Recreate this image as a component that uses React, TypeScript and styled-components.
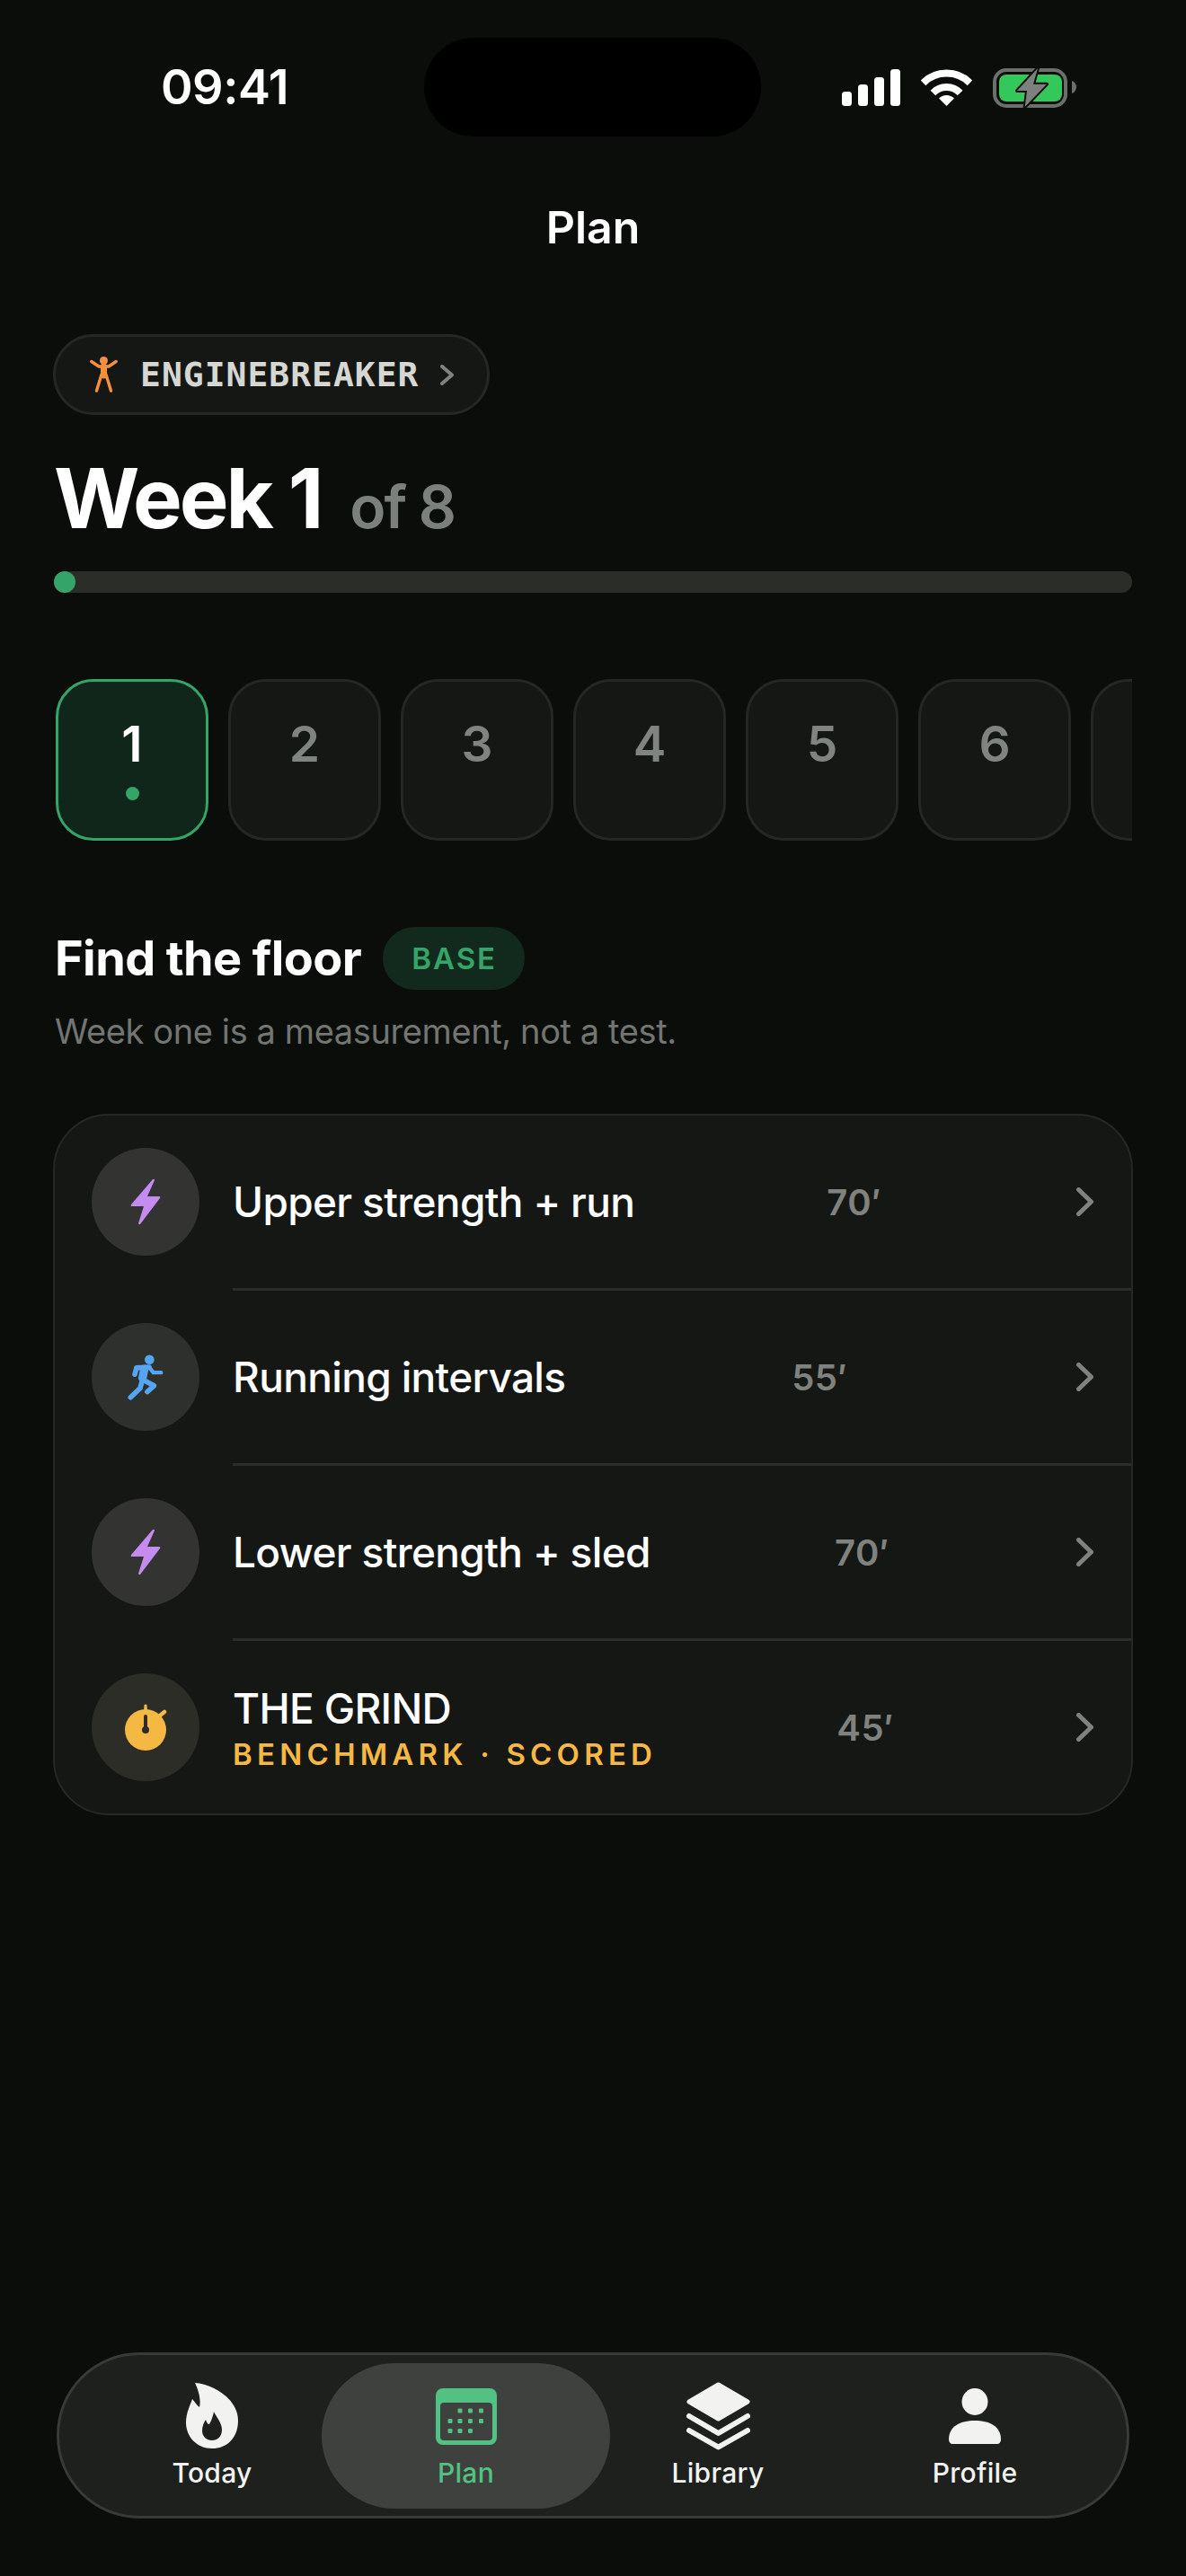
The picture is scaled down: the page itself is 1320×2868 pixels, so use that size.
import React from 'react';
import styled, { createGlobalStyle } from 'styled-components';

const GlobalStyle = createGlobalStyle`
  html, body {
    margin: 0;
    padding: 0;
    background: #0b0d0b;
  }
  * {
    box-sizing: border-box;
  }
`;

const Page = styled.div`
  width: 1320px;
  height: 2868px;
  display: flex;
  flex-direction: column;
  background: #0b0d0b;
  color: #fff;
  font-family: Inter, "Liberation Sans", sans-serif;
  overflow: hidden;
`;

const StatusBar = styled.div`
  display: flex;
  align-items: center;
  padding: 42px 0 0 179px;
`;

const Clock = styled.div`
  width: 293px;
  font-size: 54px;
  line-height: 60px;
  font-weight: 600;
  letter-spacing: -0.5px;
`;

const Island = styled.div`
  width: 375px;
  height: 110px;
  border-radius: 55px;
  background: #000;
`;

const StatusIcons = styled.div`
  display: flex;
  align-items: center;
  gap: 23px;
  margin-left: 90px;
`;

const ScreenTitle = styled.h1`
  margin: 71px 0 0;
  text-align: center;
  font-size: 50px;
  line-height: 60px;
  font-weight: 600;
`;

const Content = styled.div`
  display: flex;
  flex-direction: column;
  align-items: flex-start;
  padding: 89px 60px 0;
`;

const ProgramPill = styled.div`
  display: inline-flex;
  align-items: center;
  height: 90px;
  margin-left: -1px;
  padding: 0 37px 0 38px;
  border: 3px solid #252724;
  border-radius: 45px;
  background: #151715;
`;

const ProgramName = styled.span`
  margin: 0 24px 0 25px;
  font-family: "DejaVu Sans Mono", "Liberation Mono", monospace;
  font-size: 38px;
  line-height: 44px;
  font-weight: 600;
  letter-spacing: 1px;
  color: #d6d7d3;
`;

const WeekHeading = styled.div`
  display: flex;
  align-items: baseline;
  margin: 37px 0 0 0;
`;

const WeekNumber = styled.span`
  font-size: 92px;
  line-height: 112px;
  font-weight: 700;
  letter-spacing: -3px;
`;

const WeekTotal = styled.span`
  margin-left: 32px;
  font-size: 66px;
  font-weight: 600;
  letter-spacing: -2px;
  color: #7c807c;
`;

const ProgressTrack = styled.div`
  width: 1200px;
  height: 24px;
  margin-top: 25px;
  border-radius: 12px;
  background: #2b2d28;
`;

const ProgressFill = styled.div`
  height: 100%;
  border-radius: 12px;
  background: #34a468;
`;

const WeekStrip = styled.div`
  display: flex;
  gap: 22px;
  width: 1200px;
  margin-top: 96px;
  padding-left: 2px;
  overflow: hidden;
`;

const WeekTile = styled.div<{ $active?: boolean }>`
  flex: 0 0 170px;
  height: 180px;
  display: flex;
  flex-direction: column;
  align-items: center;
  padding-top: 37px;
  border: 3px solid ${props => (props.$active ? '#34a468' : '#252724')};
  border-radius: 42px;
  background: ${props => (props.$active ? '#11261b' : '#151715')};
`;

const TileNumber = styled.span<{ $active?: boolean }>`
  font-size: 55px;
  line-height: 64px;
  font-weight: 600;
  color: ${props => (props.$active ? '#fff' : '#808480')};
`;

const TileDot = styled.span`
  width: 15px;
  height: 15px;
  margin-top: 16px;
  border-radius: 50%;
  background: #34a468;
`;

const PhaseRow = styled.div`
  display: flex;
  align-items: center;
  gap: 24px;
  margin: 96px 0 0 1px;
`;

const PhaseName = styled.h2`
  margin: 0;
  font-size: 54px;
  line-height: 70px;
  font-weight: 700;
  letter-spacing: -0.6px;
`;

const PhaseBadge = styled.span`
  display: flex;
  align-items: center;
  height: 70px;
  padding: 0 31px 0 32px;
  border-radius: 35px;
  background: #12291d;
  color: #34a468;
  font-size: 33px;
  font-weight: 600;
  letter-spacing: 2px;
`;

const PhaseNote = styled.p`
  margin: 21px 0 0 1px;
  font-size: 38px;
  line-height: 50px;
  letter-spacing: -0.4px;
  color: #727572;
`;

const SessionCard = styled.div`
  width: 1202px;
  margin: 67px 0 0 -1px;
  border: 2px solid #262825;
  border-radius: 62px;
  background: #151715;
  overflow: hidden;
`;

const SessionRow = styled.div`
  display: flex;
  align-items: center;
  gap: 37px;
  height: 192px;
  padding: 0 42px 0 41px;
`;

const SessionDivider = styled.div`
  height: 3px;
  margin-left: 198px;
  background: #2b2d28;
`;

const IconCircle = styled.div<{ $tone: string }>`
  flex: 0 0 120px;
  height: 120px;
  display: flex;
  align-items: center;
  justify-content: center;
  border-radius: 50%;
  background: ${props => props.$tone};
`;

const SessionBody = styled.div`
  flex: 1;
  display: flex;
  align-items: center;
  justify-content: space-between;
`;

const SessionName = styled.div`
  font-size: 46px;
  line-height: 56px;
  font-weight: 500;
  letter-spacing: -0.65px;
`;

const SessionTag = styled.div`
  margin-top: 3px;
  font-size: 33px;
  line-height: 40px;
  font-weight: 600;
  letter-spacing: 5.2px;
  color: #f5b842;
`;

const Duration = styled.span`
  margin-right: 3px;
  font-size: 40px;
  font-weight: 600;
  letter-spacing: 0.5px;
  color: #7f827e;
`;

const TabBar = styled.nav`
  display: grid;
  grid-template-columns: 244px 321px 240px 332px;
  height: 185px;
  margin: auto 63px 64px;
  padding: 9px 0 0 48px;
  border: 3px solid #383a39;
  border-radius: 92px;
  background: #1e201e;
`;

const Tab = styled.div<{ $active?: boolean }>`
  height: 162px;
  display: flex;
  flex-direction: column;
  align-items: center;
  padding-top: 19px;
  border-radius: 81px;
  background: ${props => (props.$active ? '#3f413e' : 'transparent')};
  color: ${props => (props.$active ? '#52c183' : '#f2f3f0')};
`;

const TabIcon = styled.div`
  height: 80px;
  display: flex;
  align-items: center;
  justify-content: center;
`;

const TabLabel = styled.span`
  margin-top: 3px;
  font-size: 30px;
  line-height: 40px;
  font-weight: 500;
  letter-spacing: 0.3px;
`;

const SignalIcon = () => (
  <svg width="65" height="41" viewBox="0 0 65 41" fill="#fff">
    <rect x="0" y="25" width="11" height="16" rx="3.5" />
    <rect x="18" y="17" width="11" height="24" rx="3.5" />
    <rect x="36" y="9" width="11" height="32" rx="3.5" />
    <rect x="54" y="0" width="11" height="41" rx="3.5" />
  </svg>
);

const WifiIcon = () => (
  <svg width="57" height="41" viewBox="0 0 57 41" fill="none" stroke="#fff" strokeWidth="8">
    <path d="M2.5 15.3A37 37 0 0 1 54.5 15.3" />
    <path d="M13.4 26.5A21 21 0 0 1 43.6 26.5" />
    <path d="M28.5 41L20 32.5A12 12 0 0 1 37 32.5Z" fill="#fff" stroke="none" />
  </svg>
);

const BatteryIcon = () => (
  <svg width="93" height="45" viewBox="0 0 93 45" fill="none">
    <rect x="2" y="3" width="79" height="40" rx="13" stroke="#6d6f6d" strokeWidth="4" />
    <rect x="7" y="8" width="70" height="30" rx="8" fill="#34c759" />
    <path d="M88 15C91 16 93 19 93 22C93 25 91 28 88 29Z" fill="#6d6f6d" />
    <path
      d="M50 1L27 26H38L35.7 44L60 18.7H45Z"
      fill="#7d807c"
      stroke="#0b0d0b"
      strokeWidth="4"
      strokeLinejoin="round"
      paintOrder="stroke"
    />
  </svg>
);

const ArmsUpIcon = () => (
  <svg width="31" height="40" viewBox="0 0 31 40" fill="none" stroke="#f58f3c" strokeLinecap="round" strokeLinejoin="round">
    <circle cx="15.5" cy="4.5" r="4.5" fill="#f58f3c" stroke="none" />
    <path d="M1.8 5.5L10 11H21L29.2 5.5" strokeWidth="3.4" />
    <path d="M15.5 11V21" strokeWidth="7" />
    <path d="M13 20L7.5 38M18 20L23.5 38" strokeWidth="3.4" />
  </svg>
);

const Chevron = ({ w, h, sw, color }: { w: number; h: number; sw: number; color: string }) => (
  <svg width={w} height={h} viewBox={`0 0 ${w} ${h}`} fill="none" stroke={color} strokeWidth={sw} strokeLinecap="round" strokeLinejoin="round">
    <path d={`M${sw / 2} ${sw / 2}L${w - sw / 2} ${h / 2}L${sw / 2} ${h - sw / 2}`} />
  </svg>
);

const BoltIcon = () => (
  <svg width="34" height="52" viewBox="0 0 34 52" fill="#c48bf0">
    <path d="M25 1L1 29Q0 31 2 31H15L9 50Q10 52 11 51L33 22Q34 20 32 20H19L27 2Q27 0 25 1Z" />
  </svg>
);

const RunnerIcon = () => (
  <svg width="40" height="51" viewBox="0 0 120 152" fill="none" stroke="#56a5f2" strokeLinecap="round" strokeLinejoin="round">
    <circle cx="73" cy="17" r="16" fill="#56a5f2" stroke="none" />
    <path d="M30 44L24 66M30 44L72 42" strokeWidth="17" />
    <path d="M72 42L86 60L112 60" strokeWidth="13" />
    <path d="M56 48L50 78" strokeWidth="28" />
    <path d="M50 82L42 112L10 143" strokeWidth="17" />
    <path d="M52 84L88 104L66 124" strokeWidth="17" />
  </svg>
);

const StopwatchIcon = () => (
  <svg width="47" height="52" viewBox="0 0 47 52" fill="#f5b842">
    <circle cx="23" cy="29" r="23" />
    <path d="M21 8L21.5 1.5Q23 -0.5 24.5 1.5L25 8Z" />
    <path d="M39 13L44 9" stroke="#f5b842" strokeWidth="4.5" strokeLinecap="round" />
    <path d="M23 14V29" stroke="#2c2d27" strokeWidth="4" strokeLinecap="round" />
    <circle cx="23" cy="29" r="4" fill="#2c2d27" />
  </svg>
);

const FlameIcon = () => (
  <svg width="58" height="74" viewBox="0 0 58 74" fill="#f2f3f0">
    <path
      fillRule="evenodd"
      d="M10 0C30 1 58 18 58 42C58 61 46 73 29 73C12 73 0 60 0 44C0 33 5 24 7 18C10 21 12 25 15 27C17 19 14 8 10 0ZM31 32C33 37 40 44 40 52C40 60 35 64 29 64C23 64 18 60 18 53C18 48 20 44 22 41C23 44 24 46 26 46C28 43 30 37 31 32Z"
    />
  </svg>
);

const CalendarIcon = () => {
  const dots = [
    [27, 25], [38.5, 25], [50.5, 25],
    [16, 36.5], [27, 36.5], [38.5, 36.5], [50.5, 36.5],
    [16, 47.5], [27, 47.5], [38.5, 47.5],
  ];
  return (
    <svg width="68" height="63" viewBox="0 0 68 63" fill="none">
      <rect width="68" height="63" rx="8" fill="#52c183" />
      <rect x="5" y="16" width="58" height="42" rx="4" fill="#3f413e" />
      {dots.map(([x, y]) => (
        <rect key={`${x}-${y}`} x={x - 2.5} y={y - 2.5} width="5" height="5" rx="1.2" fill="#52c183" />
      ))}
    </svg>
  );
};

const StackIcon = () => (
  <svg width="71" height="76" viewBox="0 0 71 76" fill="none" stroke="#f2f3f0" strokeLinecap="round" strokeLinejoin="round">
    <path d="M35.5 3L68 22L35.5 41L3 22Z" fill="#f2f3f0" strokeWidth="5" />
    <path d="M3 38L35.5 57L68 38" strokeWidth="6" />
    <path d="M3 54L35.5 72.5L68 54" strokeWidth="6" />
  </svg>
);

const PersonIcon = () => (
  <svg width="58" height="62" viewBox="0 0 58 62" fill="#f2f3f0">
    <ellipse cx="29" cy="15" rx="14.5" ry="15" />
    <path d="M0 57C0 42 13 36 29 36C45 36 58 42 58 57C58 60 56 62 54 62H4C2 62 0 60 0 57Z" />
  </svg>
);

const weeks = [1, 2, 3, 4, 5, 6, 7, 8];

const sessions = [
  { name: 'Upper strength + run', time: '70′', tone: '#333432', icon: <BoltIcon /> },
  { name: 'Running intervals', time: '55′', tone: '#2e302d', icon: <RunnerIcon /> },
  { name: 'Lower strength + sled', time: '70′', tone: '#333432', icon: <BoltIcon /> },
  { name: 'THE GRIND', tag: 'BENCHMARK · SCORED', time: '45′', tone: '#2c2d27', icon: <StopwatchIcon /> },
];

const tabs = [
  { label: 'Today', icon: <FlameIcon /> },
  { label: 'Plan', icon: <CalendarIcon />, active: true },
  { label: 'Library', icon: <StackIcon /> },
  { label: 'Profile', icon: <PersonIcon /> },
];

export default function App() {
  return (
    <Page>
      <GlobalStyle />
      <StatusBar>
        <Clock>09:41</Clock>
        <Island />
        <StatusIcons>
          <SignalIcon />
          <WifiIcon />
          <BatteryIcon />
        </StatusIcons>
      </StatusBar>
      <ScreenTitle>Plan</ScreenTitle>
      <Content>
        <ProgramPill>
          <ArmsUpIcon />
          <ProgramName>ENGINEBREAKER</ProgramName>
          <Chevron w={15} h={23} sw={4} color="#7f827e" />
        </ProgramPill>
        <WeekHeading>
          <WeekNumber>Week 1</WeekNumber>
          <WeekTotal>of 8</WeekTotal>
        </WeekHeading>
        <ProgressTrack>
          <ProgressFill style={{ width: `${(1 / 50) * 100}%` }} />
        </ProgressTrack>
        <WeekStrip>
          {weeks.map(week => (
            <WeekTile key={week} $active={week === 1}>
              <TileNumber $active={week === 1}>{week}</TileNumber>
              {week === 1 && <TileDot />}
            </WeekTile>
          ))}
        </WeekStrip>
        <PhaseRow>
          <PhaseName>Find the floor</PhaseName>
          <PhaseBadge>BASE</PhaseBadge>
        </PhaseRow>
        <PhaseNote>Week one is a measurement, not a test.</PhaseNote>
        <SessionCard>
          {sessions.map((session, index) => (
            <React.Fragment key={session.name}>
              {index > 0 && <SessionDivider />}
              <SessionRow>
                <IconCircle $tone={session.tone}>{session.icon}</IconCircle>
                <SessionBody>
                  <div>
                    <SessionName>{session.name}</SessionName>
                    {session.tag && <SessionTag>{session.tag}</SessionTag>}
                  </div>
                  <Duration>{session.time}</Duration>
                  <Chevron w={19} h={32} sw={5} color="#7f827e" />
                </SessionBody>
              </SessionRow>
            </React.Fragment>
          ))}
        </SessionCard>
      </Content>
      <TabBar>
        {tabs.map(tab => (
          <Tab key={tab.label} $active={tab.active}>
            <TabIcon>{tab.icon}</TabIcon>
            <TabLabel>{tab.label}</TabLabel>
          </Tab>
        ))}
      </TabBar>
    </Page>
  );
}
